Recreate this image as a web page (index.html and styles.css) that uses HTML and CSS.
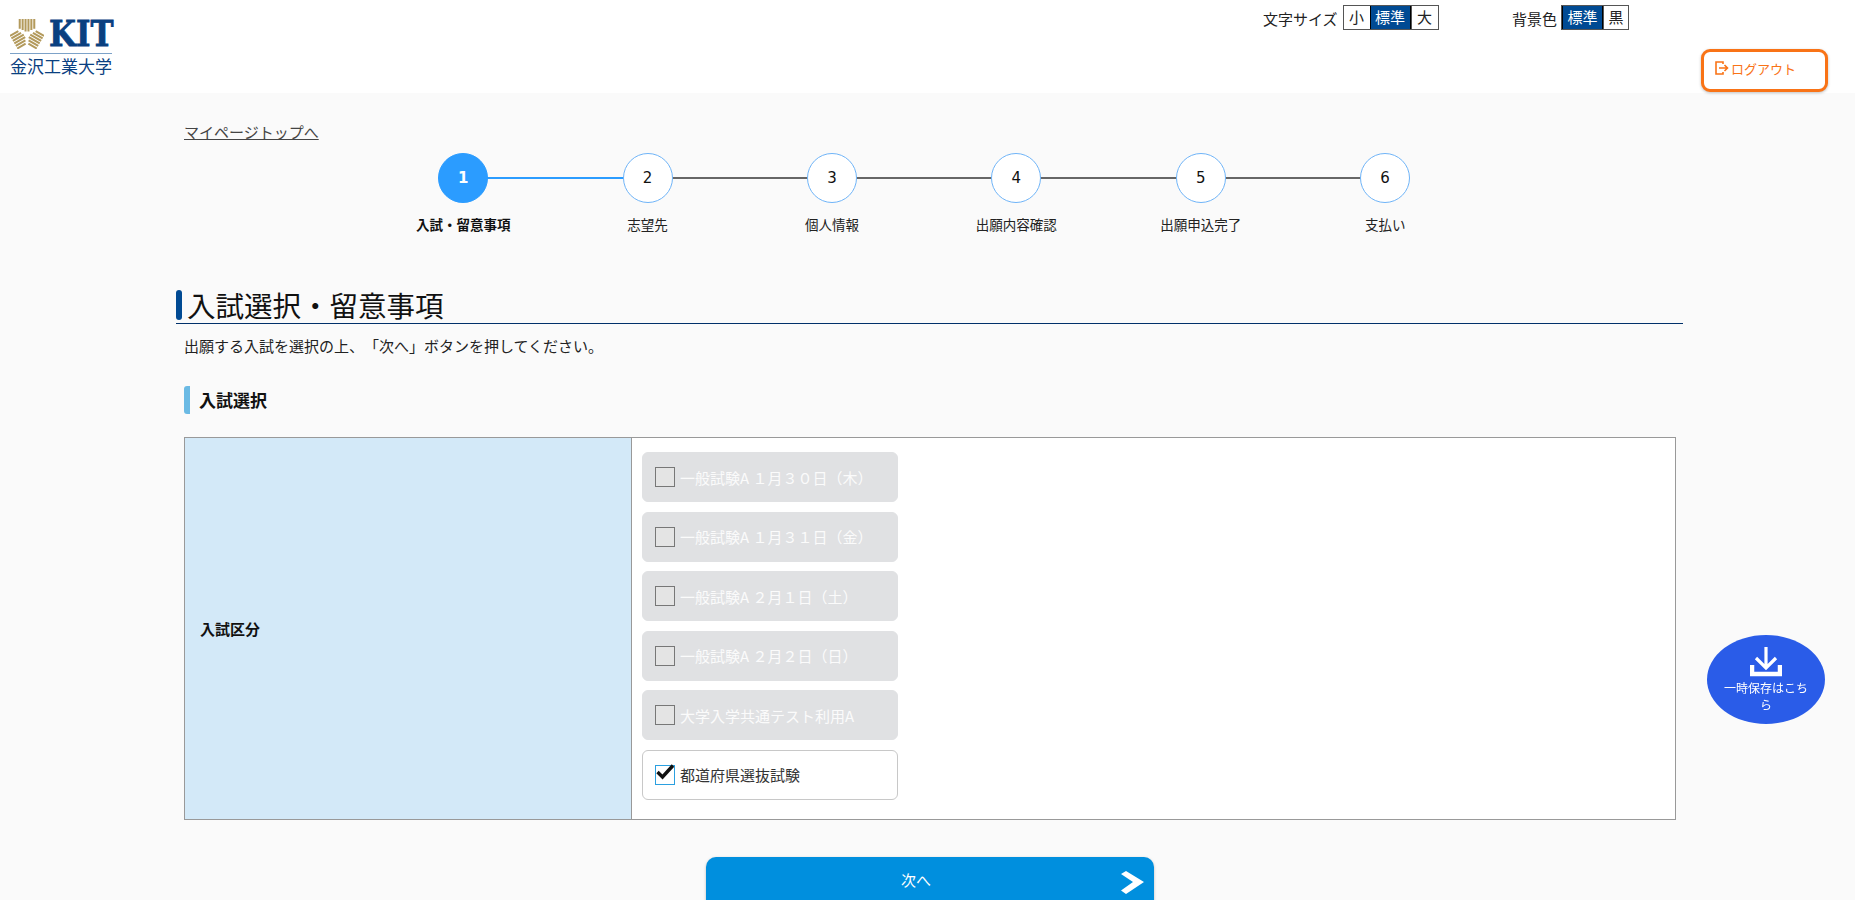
FILE: index.html
```html
<!DOCTYPE html>
<html lang="ja">
<head>
    <meta charset="UTF-8">
    <meta name="viewport" content="width=device-width, initial-scale=1.0">
    <title>入試選択・留意事項</title>
    <link rel="stylesheet" href="styles.css">
</head>
<body>
    <header class="site-header">
        <div class="logo">
            <div class="logo-top">
                <svg class="logo-mark" width="34" height="31" viewBox="-17.500 -17 35 32">
                    <defs>
                        <path id="arm" d="M-7.500 -16 V-6 M-4.500 -16 V-4.500 M-1.500 -16 V-3 M1.500 -16 V-3 M4.500 -16 V-4.500 M7.500 -16 V-6" fill="none" stroke="#b39a5c" stroke-width="2.100"/>
                    </defs>
                    <use href="#arm"/>
                    <use href="#arm" transform="rotate(120)"/>
                    <use href="#arm" transform="rotate(240)"/>
                </svg>
                <span class="logo-kit">KIT</span>
            </div>
            <div class="logo-name">金沢工業大学</div>
        </div>
        <div class="header-right">
            <div class="setting-row">
                <div class="setting setting-size">
                    <span class="setting-label">文字サイズ</span>
                    <div class="setting-btns">
                        <span class="setting-btn">小</span>
                        <span class="setting-btn active">標準</span>
                        <span class="setting-btn">大</span>
                    </div>
                </div>
                <div class="setting setting-bg">
                    <span class="setting-label">背景色</span>
                    <div class="setting-btns">
                        <span class="setting-btn active">標準</span>
                        <span class="setting-btn">黒</span>
                    </div>
                </div>
            </div>
            <a class="logout-btn" href="#">
                <svg width="14" height="14" viewBox="0 0 14 14" fill="none" stroke="#f97316" stroke-width="1.600">
                    <path d="M8 3 V1 H1 V13 H8 V11"/>
                    <path d="M4 7 H12 M9.500 4 L12.500 7 L9.500 10"/>
                </svg>
                ログアウト
            </a>
        </div>
    </header>

    <main class="content">
        <a class="top-link" href="#">マイページトップへ</a>

        <ol class="steps">
            <li class="step current"><span class="step-num">1</span><span class="step-label">入試・留意事項</span></li>
            <li class="step done-line"><span class="step-num">2</span><span class="step-label">志望先</span></li>
            <li class="step"><span class="step-num">3</span><span class="step-label">個人情報</span></li>
            <li class="step"><span class="step-num">4</span><span class="step-label">出願内容確認</span></li>
            <li class="step"><span class="step-num">5</span><span class="step-label">出願申込完了</span></li>
            <li class="step"><span class="step-num">6</span><span class="step-label">支払い</span></li>
        </ol>

        <h1 class="page-title">入試選択・留意事項</h1>
        <p class="lead">出願する入試を選択の上、「次へ」ボタンを押してください。</p>

        <h2 class="section-title">入試選択</h2>

        <div class="form-table">
            <div class="form-head">入試区分</div>
            <div class="form-body">
                <label class="option disabled"><span class="check"></span>一般試験A １月３０日（木）</label>
                <label class="option disabled"><span class="check"></span>一般試験A １月３１日（金）</label>
                <label class="option disabled"><span class="check"></span>一般試験A ２月１日（土）</label>
                <label class="option disabled"><span class="check"></span>一般試験A ２月２日（日）</label>
                <label class="option disabled"><span class="check"></span>大学入学共通テスト利用A</label>
                <label class="option checked">
                    <span class="check">
                        <svg width="20" height="18" viewBox="0 0 20 18"><path d="M2.500 9 L7.500 14 L18 2.500" fill="none" stroke="#111" stroke-width="3.400"/></svg>
                    </span>
                    都道府県選抜試験
                </label>
            </div>
        </div>

        <div class="next-wrap">
            <button class="next-btn">次へ
                <svg class="next-arrow" width="24" height="24" viewBox="0 0 24 24"><path d="M1 4 L6 1 L24 12 L6 24 L1 20.500 L13 12 Z" fill="#fff"/></svg>
            </button>
        </div>
    </main>

    <a class="save-float" href="#">
        <svg width="32" height="30" viewBox="0 0 32 30" fill="none" stroke="#fff">
            <path d="M16 0 V20 M6 11 L16 21 L26 11" stroke-width="3.200"/>
            <path d="M2 18 V27 H30 V18" stroke-width="4.500"/>
        </svg>
        <span>一時保存はこちら</span>
    </a>
</body>
</html>
```

FILE: styles.css
```css
* {
    box-sizing: border-box;
}

html, body {
    height: 900px;
    overflow: hidden;
}

body {
    margin: 0;
    font-family: "Noto Sans CJK JP", "Noto Sans", sans-serif;
    font-size: 15px;
    color: #222;
    background-color: #fafafa;
    text-spacing-trim: space-all;
}

/* header */
.site-header {
    display: flex;
    justify-content: space-between;
    height: 93px;
    background-color: #fff;
}

.logo {
    width: 102px;
    margin: 17px 0 0 10px;
}

.logo-top {
    display: flex;
    align-items: center;
    gap: 5px;
    height: 37px;
    border-bottom: 1px solid #7da2c8;
    padding-bottom: 4px;
}

.logo-mark {
    flex: none;
}

.logo-kit {
    flex: none;
    width: 63px;
    font-family: "DejaVu Serif", serif;
    font-weight: bold;
    font-size: 36px;
    line-height: 30px;
    color: #0a4080;
    transform: scaleX(0.86);
    transform-origin: left center;
    -webkit-text-stroke: 0.8px #0a4080;
}

.logo-name {
    margin-top: 2px;
    font-size: 17px;
    line-height: 20px;
    color: #0a4080;
    white-space: nowrap;
}

.header-right {
    width: 592px;
    padding-top: 5px;
    padding-right: 27px;
}

.setting-row {
    display: flex;
    height: 25px;
}

.setting {
    display: flex;
    align-items: flex-end;
    gap: 5px;
}

.setting-size {
    width: 249px;
}

.setting-bg {
    gap: 4px;
}

.setting-label {
    font-size: 15px;
    line-height: 20px;
    color: #222;
    position: relative;
    top: -1px;
}

.setting-btns {
    display: flex;
    border: 1px solid #555;
    height: 25px;
    background-color: #fff;
}

.setting-btn {
    padding: 0 4.500px;
    font-size: 15px;
    line-height: 21px;
    border-left: 1px solid #555;
    color: #222;
}

.setting-size .setting-btn:not(.active) {
    padding: 0 5.500px;
}

.setting-btn:first-child {
    border-left: none;
}

.setting-btn.active {
    background-color: #004a93;
    color: #fff;
    border: 1px solid #000;
    border-width: 0 1px;
}

.logout-btn {
    display: flex;
    align-items: center;
    gap: 2px;
    width: 127px;
    height: 43px;
    margin: 19px 0 0 auto;
    padding: 0 0 5px 11px;
    background-color: #fff;
    border: 3px solid #f97316;
    border-radius: 9px;
    box-shadow: 0 1px 3px rgba(0, 0, 0, 0.25);
    color: #f97316;
    font-size: 13px;
    text-decoration: none;
}

/* content */
.content {
    width: 1492px;
    margin-left: 184px;
}

.top-link {
    display: inline-block;
    margin-top: 28px;
    font-size: 15px;
    line-height: 22px;
    color: #444;
}

.steps {
    display: grid;
    grid-template-columns: repeat(6, 184.4px);
    margin: 10px 0 0 187px;
    padding: 0;
    list-style: none;
    height: 113px;
}

.step {
    position: relative;
    display: flex;
    flex-direction: column;
    align-items: center;
}

.step::before {
    content: "";
    position: absolute;
    top: 24px;
    left: -50%;
    width: 100%;
    height: 2px;
    background-color: #666;
}

.step:first-child::before {
    display: none;
}

.step.done-line::before {
    background-color: #2b9cff;
}

.step-num {
    position: relative;
    z-index: 1;
    display: flex;
    align-items: center;
    justify-content: center;
    width: 50px;
    height: 50px;
    border: 1.500px solid #6fb4f8;
    border-radius: 50%;
    background-color: #fff;
    font-family: "DejaVu Sans", sans-serif;
    font-size: 15px;
    color: #111;
}

.step-label {
    margin-top: 11px;
    font-size: 13.500px;
    line-height: 21px;
    color: #222;
}

.step.current .step-num {
    background-color: #2b9cff;
    border-color: #2b9cff;
    color: #fff;
    font-weight: bold;
}

.step.current .step-label {
    font-weight: bold;
    color: #111;
}

.page-title {
    position: relative;
    margin: 24px -7px 0 -8px;
    padding: 0 0 0 11px;
    height: 34px;
    font-size: 28.500px;
    font-weight: normal;
    line-height: 30px;
    color: #111;
    border-bottom: 1px solid #00306a;
}

.page-title::before {
    content: "";
    position: absolute;
    left: 0;
    top: 0;
    width: 6px;
    height: 30px;
    border-radius: 3px;
    background-color: #004a93;
}

.lead {
    margin: 11px 0 0;
    font-size: 15px;
    line-height: 22px;
    color: #222;
}

.section-title {
    margin: 29px 0 0;
    padding-left: 9px;
    height: 28px;
    font-size: 17px;
    font-weight: bold;
    line-height: 28px;
    color: #111;
    border-left: 6px solid #6bbae4;
    border-radius: 3px;
}

.form-table {
    display: flex;
    height: 383px;
    margin-top: 23px;
    border: 1px solid #999;
    background-color: #fff;
}

.form-head {
    display: flex;
    align-items: center;
    width: 447px;
    padding-left: 15px;
    background-color: #d3e9f8;
    border-right: 1px solid #999;
    font-size: 15px;
    font-weight: bold;
    color: #111;
}

.form-body {
    display: flex;
    flex-direction: column;
    gap: 9.500px;
    padding: 14px 10px;
}

.option {
    display: flex;
    align-items: center;
    gap: 5px;
    width: 256px;
    height: 50px;
    padding-left: 12px;
    border: 1px solid #e0e1e3;
    border-radius: 6px;
    font-size: 15px;
}

.option.disabled {
    background-color: #e0e1e3;
    color: #fbfbfb;
}

.option.checked {
    background-color: #fff;
    border-color: #c8c8c8;
    color: #333;
}

.check {
    position: relative;
    flex: none;
    width: 20px;
    height: 20px;
    border: 1px solid #777;
    background-color: #e4e4e4;
}

.option.checked .check {
    border-color: #2ba0e0;
    background-color: #fff;
}

.check svg {
    position: absolute;
    left: -1px;
    top: -3px;
}

.next-wrap {
    display: flex;
    justify-content: center;
    margin-top: 37px;
}

.next-btn {
    position: relative;
    width: 448px;
    height: 60px;
    padding: 0 28px 16px 0;
    border: none;
    border-radius: 10px;
    background-color: #008fde;
    box-shadow: 0 1px 3px rgba(0, 0, 0, 0.25);
    font-family: inherit;
    font-size: 15px;
    color: #fff;
    cursor: pointer;
}

.next-arrow {
    position: absolute;
    right: 10px;
    top: 13px;
}

/* floating save button */
.save-float {
    position: fixed;
    left: 1707px;
    top: 635px;
    display: flex;
    flex-direction: column;
    align-items: center;
    width: 118px;
    height: 89px;
    padding: 12px 14px 0;
    border-radius: 50%;
    background-color: #2a5ce8;
    color: #fff;
    font-size: 12px;
    line-height: 17px;
    text-align: center;
    text-decoration: none;
}

.save-float span {
    margin-top: 2px;
}
```
